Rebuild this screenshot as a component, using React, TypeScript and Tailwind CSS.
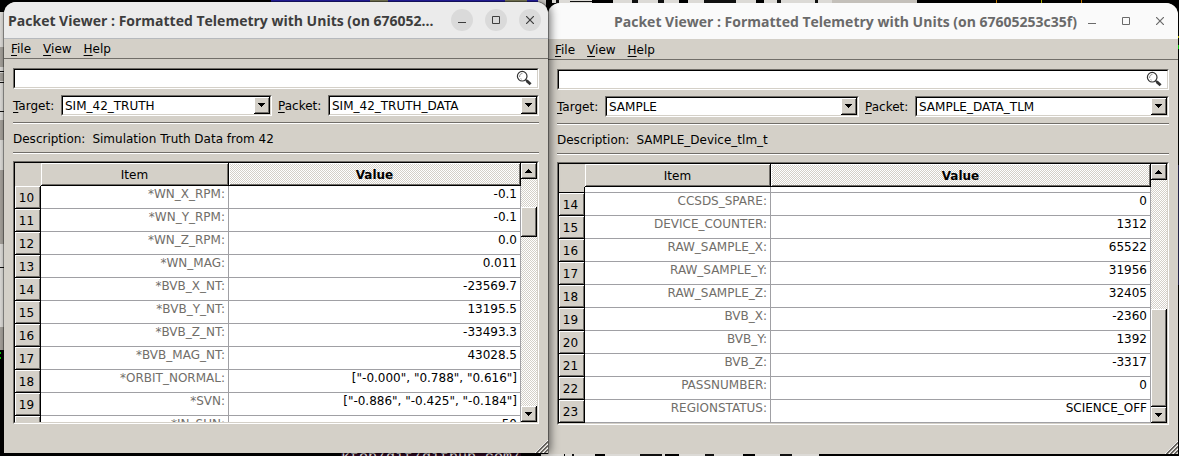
import { useId, type ReactNode } from "react";
import clsx from "clsx";

type Row = [number, string, string];

type Viewer = {
  title: string;
  active: boolean;
  target: string;
  packet: string;
  description: string;
  scroll: [number, number, number];
  rows: Row[];
};

const truth: Viewer = {
  title: "Packet Viewer : Formatted Telemetry with Units (on 676052…",
  active: true,
  target: "SIM_42_TRUTH",
  packet: "SIM_42_TRUTH_DATA",
  description: "Simulation Truth Data from 42",
  scroll: [28, 29, 170],
  rows: [
    [10, "*WN_X_RPM:", "-0.1"],
    [11, "*WN_Y_RPM:", "-0.1"],
    [12, "*WN_Z_RPM:", "0.0"],
    [13, "*WN_MAG:", "0.011"],
    [14, "*BVB_X_NT:", "-23569.7"],
    [15, "*BVB_Y_NT:", "13195.5"],
    [16, "*BVB_Z_NT:", "-33493.3"],
    [17, "*BVB_MAG_NT:", "43028.5"],
    [18, "*ORBIT_NORMAL:", '["-0.000", "0.788", "0.616"]'],
    [19, "*SVN:", '["-0.886", "-0.425", "-0.184"]'],
    [20, "*IN_SUN:", "50"],
  ],
};

const sample: Viewer = {
  title: "Packet Viewer : Formatted Telemetry with Units (on 67605253c35f)",
  active: false,
  target: "SAMPLE",
  packet: "SAMPLE_DATA_TLM",
  description: "SAMPLE_Device_tlm_t",
  scroll: [130, 97, 0],
  rows: [
    [14, "CCSDS_SPARE:", "0"],
    [15, "DEVICE_COUNTER:", "1312"],
    [16, "RAW_SAMPLE_X:", "65522"],
    [17, "RAW_SAMPLE_Y:", "31956"],
    [18, "RAW_SAMPLE_Z:", "32405"],
    [19, "BVB_X:", "-2360"],
    [20, "BVB_Y:", "1392"],
    [21, "BVB_Z:", "-3317"],
    [22, "PASSNUMBER:", "0"],
    [23, "REGIONSTATUS:", "SCIENCE_OFF"],
  ],
};

const dither =
  "bg-[conic-gradient(#ffffff_25%,#d4d0c8_0_50%,#ffffff_0_75%,#d4d0c8_0)] bg-[length:2px_2px]";
const raised =
  "border-r border-b border-black shadow-[inset_1px_1px_#ffffff,inset_-1px_-1px_#716e69]";

// Sunken 3D frame, two pixels thick
function Sunken({ className, children }: { className?: string; children: ReactNode }) {
  return (
    <div className={clsx("flex min-w-0 border border-t-[#716e69] border-l-[#716e69] border-r-white border-b-white", className)}>
      <div className="relative flex min-w-0 flex-1 overflow-hidden border border-t-black border-l-black border-r-[#d4d0c8] border-b-[#d4d0c8] bg-white">
        {children}
      </div>
    </div>
  );
}

function Arrow({ up }: { up?: boolean }) {
  return (
    <svg viewBox="0 0 7 4" className="h-1 w-[7px]" shapeRendering="crispEdges">
      <path d={up ? "M3 0h1v1h1v1h1v1h1v1H0V3h1V2h1V1h1z" : "M0 0h7v1H6v1H5v1H4v1H3V3H2V2H1V1H0z"} />
    </svg>
  );
}

function Divider() {
  return <div className="h-[2px] border-t border-b border-t-[#716e69] border-b-white" />;
}

function Mnemonic({ text }: { text: string }) {
  return (
    <>
      <span className="underline underline-offset-2">{text[0]}</span>
      {text.slice(1)}
    </>
  );
}

function Picker({ label, value }: { label: string; value: string }) {
  const id = useId();
  return (
    <>
      <label htmlFor={id}>
        <Mnemonic text={label} />
      </label>
      <Sunken className="h-[21px]">
        <select id={id} defaultValue={value} className="min-w-0 flex-1 appearance-none bg-white pr-4 pl-[2px] leading-[14px] outline-none">
          <option>{value}</option>
        </select>
        <span className={clsx("pointer-events-none absolute inset-y-0 right-0 flex w-4 items-center justify-center bg-[#d4d0c8]", raised)}>
          <Arrow />
        </span>
      </Sunken>
    </>
  );
}

function TitleBar({ title, active }: { title: string; active: boolean }) {
  const button = clsx("flex size-[22px] items-center justify-center rounded-full", active && "bg-[#dadada]");
  return (
    <header
      className={clsx(
        "flex h-[37px] shrink-0 items-center gap-1 rounded-t-xl border-b pr-[7px] pl-1",
        active ? "justify-between border-[#b6b9bd] bg-[#ebebeb] text-[#3d3d3d]" : "justify-end border-[#d4d0c8] bg-[#fafafa] text-[#6a6a6a]",
      )}
    >
      <h1 className="truncate pt-px font-['Open_Sans','Noto_Sans',sans-serif] text-[14px] leading-5 font-bold">{title}</h1>
      <div className="flex shrink-0 gap-3">
        <button aria-label="Minimize" className={button}>
          <svg viewBox="0 0 8 8" className="size-2" stroke="currentColor"><path d="M0 6.5h8" /></svg>
        </button>
        <button aria-label="Maximize" className={button}>
          <svg viewBox="0 0 8 8" className="size-2" fill="none" stroke="currentColor"><path d="M.5.5h7v7h-7z" /></svg>
        </button>
        <button aria-label="Close" className={button}>
          <svg viewBox="0 0 8 8" className="size-2" stroke="currentColor" strokeWidth="1.2"><path d="M0 0l8 8M8 0L0 8" /></svg>
        </button>
      </div>
    </header>
  );
}

function ScrollBar({ scroll }: { scroll: [number, number, number] }) {
  const [before, thumb, after] = scroll;
  const button = clsx("flex h-4 shrink-0 items-center justify-center bg-[#d4d0c8]", raised);
  return (
    <div className={clsx("flex w-4 shrink-0 flex-col", dither)}>
      <button aria-label="Scroll up" className={button}><Arrow up /></button>
      <div style={{ flex: before }} />
      <div style={{ flex: thumb }} className={clsx("bg-[#d4d0c8]", raised)} />
      <div style={{ flex: after }} />
      <button aria-label="Scroll down" className={button}><Arrow /></button>
    </div>
  );
}

function TelemetryTable({ viewer }: { viewer: Viewer }) {
  const cell = "border-r border-b border-[#a0a0a4] p-0 pt-px pr-[3px] text-right align-top";
  return (
    <Sunken className="min-h-0 flex-1">
      <div className="min-w-0 flex-1 overflow-hidden">
        <table className="w-full table-fixed border-separate border-spacing-0">
          <colgroup>
            <col className="w-[26px]" />
            <col className={viewer.active ? "w-[188px]" : "w-[186px]"} />
            <col />
          </colgroup>
          <thead>
            <tr className="h-[23px]">
              <td className="bg-[#d4d0c8] p-0" />
              <th className={clsx("bg-[#d4d0c8] p-0 pt-[2px] font-normal", raised)}>Item</th>
              <th className={clsx("p-0 pt-[2px] font-bold", dither, raised)}>Value</th>
            </tr>
          </thead>
          <tbody>
            {!viewer.active && (
              <tr className="h-[6px]">
                <td className="border-r border-b border-black bg-[#d4d0c8] p-0" />
                <td className={clsx(cell, "pt-0")} />
                <td className={clsx(cell, "pt-0")} />
              </tr>
            )}
            {viewer.rows.map(([index, item, value]) => (
              <tr key={index} className="h-[23px]">
                <th className={clsx("bg-[#d4d0c8] p-0 pt-px pr-[2px] font-normal", raised)}>{index}</th>
                <td className={clsx(cell, "text-[#716e69]")}>{item}</td>
                <td className={cell}>{value}</td>
              </tr>
            ))}
          </tbody>
        </table>
      </div>
      <ScrollBar scroll={viewer.scroll} />
    </Sunken>
  );
}

function PacketViewer({ viewer, className }: { viewer: Viewer; className: string }) {
  return (
    <section className={clsx("relative flex min-h-0 min-w-0 flex-col rounded-t-xl bg-[#d4d0c8]", className)}>
      <TitleBar title={viewer.title} active={viewer.active} />
      <nav className="flex h-5 shrink-0 items-center gap-3 border-b border-[#716e69] pl-[7px]">
        {["File", "View", "Help"].map((name) => (
          <button key={name}><Mnemonic text={name} /></button>
        ))}
      </nav>
      <div className="flex min-h-0 flex-1 flex-col px-[9px] pt-[9px] pb-[29px]">
        <Sunken className="h-[21px] shrink-0">
          <input aria-label="Search" className="min-w-0 flex-1 px-1 outline-none" />
          <svg viewBox="0 0 16 16" className="mr-[5px] size-4" fill="none" stroke="#333">
            <circle cx="6.2" cy="6.2" r="4.8" strokeWidth="1.2" />
            <path d="M3.6 7C3.4 5 4.6 3.6 6.4 3.4M4.6 8.6l1 .6" stroke="#888" />
            <path d="M9.5 9.5l1.4 1.4" strokeWidth="1.5" />
            <path d="M10.6 10.6l4 3.6" strokeWidth="2.8" />
          </svg>
        </Sunken>
        <div className="my-[6px] grid grid-cols-[42px_1fr_44px_1fr] items-center gap-x-[6px]">
          <Picker label="Target:" value={viewer.target} />
          <Picker label="Packet:" value={viewer.packet} />
        </div>
        <Divider />
        <p className="flex h-7 shrink-0 items-center gap-[7px] pt-[2px]">
          <span>Description:</span>
          <span>{viewer.description}</span>
        </p>
        <Divider />
        <div className="mt-[7px] flex min-h-0 flex-1 flex-col">
          <TelemetryTable viewer={viewer} />
        </div>
      </div>
      <svg viewBox="0 0 13 13" className="absolute right-0 bottom-0 size-[13px]" strokeWidth="1">
        <path d="M0 13L13 0M4 13l9-9M8 13l5-5" stroke="#fff" />
        <path d="M1.5 13L13 1.5M5.5 13L13 5.5M9.5 13L13 9.5" stroke="#55524e" strokeWidth="1.4" />
      </svg>
    </section>
  );
}

// Slivers of the other windows that show around the two viewers
function Desktop() {
  return (
    <div className="absolute inset-0 overflow-hidden">
      <svg className="absolute inset-0 size-full" shapeRendering="crispEdges">
        <path fill="#e4e2de" d="M0 12h8v338H0z" />
        <path fill="#aaa69f" d="M0 47h4v20H0zM0 73h4v8H0zM0 120h4v20H0zM0 170h4v74H0zM0 327h4v23H0z" />
        <path fill="#111" d="M0 71h4v1H0zM0 82h4v1H0zM0 111h4v1H0zM0 267h4v1H0z" />
        <path fill="#00d000" d="M0 352h1v2H0zM0 357h1v2H0z" />
        <path fill="#2a22b8" d="M271 0h267v3H271z" />
        <path fill="#8a8a62" d="M370 0h18v3h-18zM505 0h22v3h-22z" />
        <path fill="#dcdad6" d="M538 0h8v8h-8zM552 0h40v3h-40zM613 0h66v3h-66zM688 0h68v3h-68zM764 0h87v3h-87z" />
        <path fill="#111" d="M556 0h3v3h-3zM570 1h22v1h-22zM632 0h6v3h-6zM658 0h6v3h-6zM704 0h32v3h-32zM777 0h4v3h-4zM815 0h3v3h-3z" />
        <path fill="#c4c0ba" d="M832 0h85v3h-85z" />
        <path fill="#c07800" d="M996 0h1v3h-1zM1081 0h1v3h-1z" />
        <path fill="#a8a800" d="M1041 0h1v3h-1zM1178 36h1v2h-1z" />
        <path fill="#00c000" d="M1178 45h1v4h-1z" />
        <path fill="#25254a" d="M1178 165h1v120h-1z" />
        <path fill="#dcdad6" d="M541 454h23v2h-23zM565 454h30v2h-30zM605 454h60v2h-60zM679 454h64v2h-64zM755 454h64v2h-64z" />
        <path fill="#111" d="M572 454h2v2h-2zM640 454h22v2h-22zM705 454h9v2h-9zM780 454h12v2h-12z" />
      </svg>
      <span className="absolute top-[452px] left-[341px] h-4 bg-[#300a24] font-['Liberation_Mono',monospace] text-[15px] leading-3 whitespace-nowrap text-white">
        ktop/git/github.com/
      </span>
    </div>
  );
}

export default function App() {
  return (
    <main className="relative h-screen overflow-hidden bg-black font-['DejaVu_Sans',sans-serif] text-[12px] leading-[14px] text-black">
      <Desktop />
      <div className="relative grid h-full grid-cols-[544fr_630fr] grid-rows-[minmax(0,1fr)] pr-px pl-1">
        <PacketViewer viewer={truth} className="z-10 mt-[2px] mb-[3px] shadow-[0_0_0_1px_#00000055,2px_0_10px_#00000099]" />
        <PacketViewer viewer={sample} className="mt-[3px] mb-[2px]" />
      </div>
    </main>
  );
}
